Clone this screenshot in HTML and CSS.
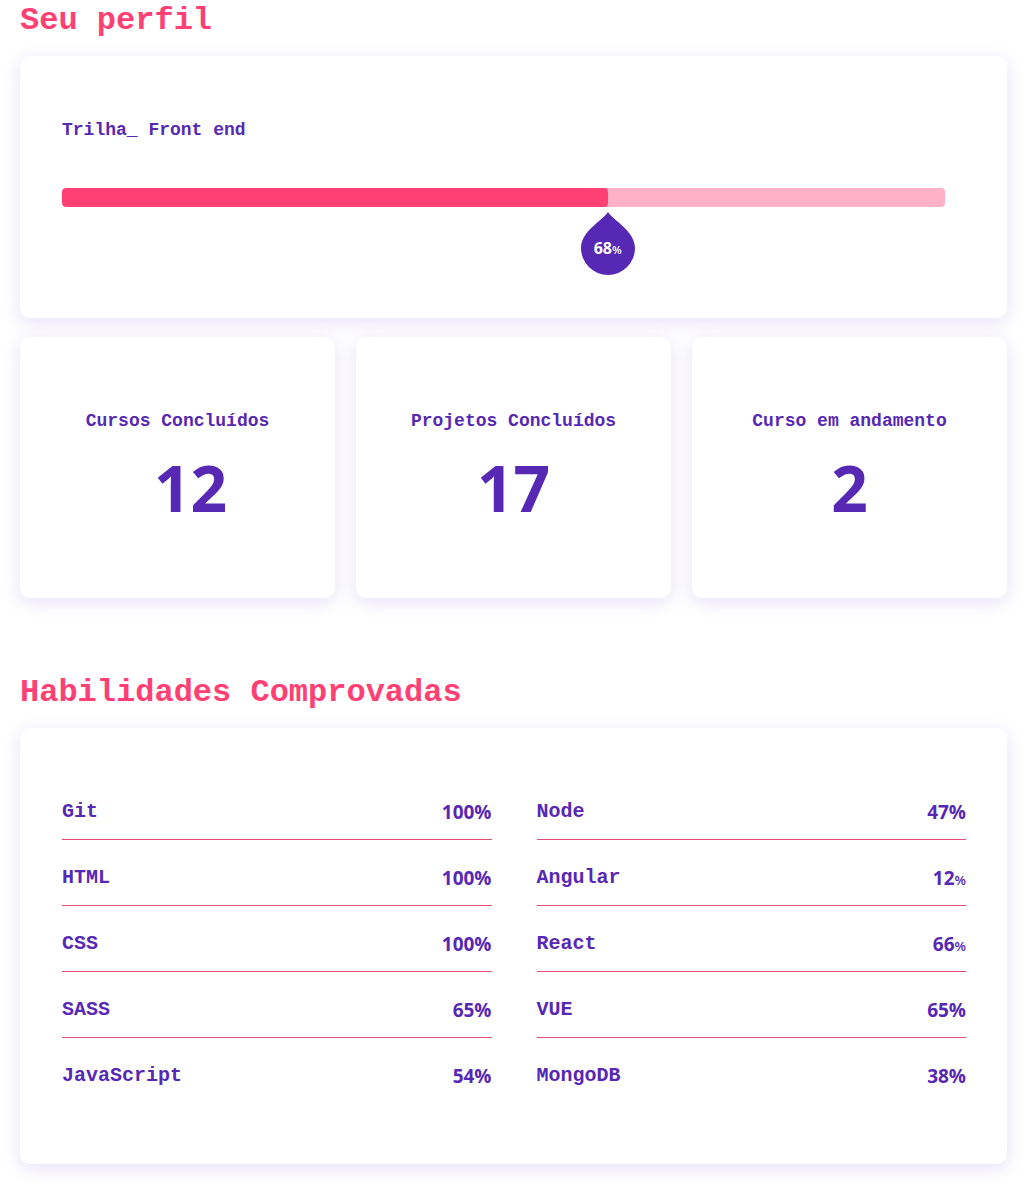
FILE: index.html
```html
<!DOCTYPE html>
<html lang="pt-BR">
<head>
<meta charset="utf-8">
<title>Seu perfil</title>
<link rel="stylesheet" href="styles.css">
</head>
<body>
<main class="page">
  <h1 class="section-title">Seu perfil</h1>
  <section class="card track">
    <p class="track-name">Trilha_ Front end</p>
    <div class="bar"><div class="bar-fill" style="width:61.8%"></div></div>
    <div class="pin-row">
      <div class="pin" style="left:61.8%">
        <svg class="pin-shape" viewBox="0 0 54 63" width="54" height="63"><path d="M27 0 C33 9 54 19 54 36 A27 27 0 0 1 0 36 C0 19 21 9 27 0 Z" fill="#5628b4"/></svg>
        <span class="pin-text">68<small>%</small></span>
      </div>
    </div>
  </section>

  <section class="stats">
    <div class="card stat">
      <p class="stat-label">Cursos Concluídos</p>
      <p class="stat-num stat-num-shift">12</p>
    </div>
    <div class="card stat">
      <p class="stat-label">Projetos Concluídos</p>
      <p class="stat-num">17</p>
    </div>
    <div class="card stat">
      <p class="stat-label">Curso em andamento</p>
      <p class="stat-num">2</p>
    </div>
  </section>

  <h2 class="section-title skills-title">Habilidades Comprovadas</h2>
  <section class="card skills">
    <ul class="skill-list">
      <li class="skill"><span class="skill-name">Git</span><span class="skill-val">100%</span></li>
      <li class="skill"><span class="skill-name">HTML</span><span class="skill-val">100%</span></li>
      <li class="skill"><span class="skill-name">CSS</span><span class="skill-val">100%</span></li>
      <li class="skill"><span class="skill-name">SASS</span><span class="skill-val">65%</span></li>
      <li class="skill"><span class="skill-name">JavaScript</span><span class="skill-val">54%</span></li>
    </ul>
    <ul class="skill-list">
      <li class="skill"><span class="skill-name">Node</span><span class="skill-val">47%</span></li>
      <li class="skill"><span class="skill-name">Angular</span><span class="skill-val">12<small>%</small></span></li>
      <li class="skill"><span class="skill-name">React</span><span class="skill-val">66<small>%</small></span></li>
      <li class="skill"><span class="skill-name">VUE</span><span class="skill-val">65%</span></li>
      <li class="skill"><span class="skill-name">MongoDB</span><span class="skill-val">38%</span></li>
    </ul>
  </section>
</main>
</body>
</html>
```

FILE: styles.css
```css
* { box-sizing: border-box; }
html, body { margin: 0; padding: 0; background: #fff; }
body {
  font-family: "Liberation Mono", "DejaVu Sans Mono", monospace;
  color: #5628b4;
}
.page {
  padding: 0 21px 20px 20px;
}
.section-title {
  margin: 0 0 17px;
  padding-top: 3px;
  font-size: 32px;
  line-height: 36px;
  font-weight: 700;
  color: #ff4074;
}
.skills-title { margin-top: 74px; }
.card {
  background: #fff;
  border-radius: 10px;
  box-shadow: 0 4px 18px rgba(100, 60, 200, 0.16);
}
.track {
  padding: 63px 62px 0 42px;
  height: 262px;
}
.track-name {
  margin: 0;
  font-size: 18px;
  line-height: 22px;
  font-weight: 700;
}
.bar {
  margin-top: 47px;
  height: 19px;
  border-radius: 4px;
  background: #ffb1c7;
  overflow: hidden;
}
.bar-fill {
  height: 100%;
  background: #ff4074;
  border-radius: 4px;
}
.pin-row {
  position: relative;
  height: 67px;
}
.pin {
  position: absolute;
  top: 5px;
  width: 54px;
  height: 63px;
  margin-left: -27px;
}
.pin-shape { display: block; }
.pin-text {
  position: absolute;
  left: 0;
  right: 0;
  top: 25px;
  text-align: center;
  font-family: "Open Sans", "DejaVu Sans", sans-serif;
  font-weight: 700;
  font-size: 16px;
  line-height: 22px;
  color: #fff;
}
.pin-text small, .skill-val small {
  font-size: 0.7em;
  font-weight: 600;
  line-height: 0;
}
.stats {
  display: grid;
  grid-template-columns: repeat(3, 1fr);
  gap: 21px;
  margin-top: 19px;
}
.stat {
  height: 261px;
  display: flex;
  flex-direction: column;
  align-items: center;
  justify-content: center;
}
.stat-label {
  margin: 0;
  font-size: 18px;
  line-height: 22px;
  font-weight: 700;
}
.stat-num {
  margin: 18px 0 0;
  font-family: "Open Sans", "DejaVu Sans", sans-serif;
  font-size: 64px;
  line-height: 76px;
  font-weight: 700;
}
.stat-num-shift { padding-left: 26px; }
.skills {
  display: grid;
  grid-template-columns: 1fr 1fr;
  column-gap: 45px;
  padding: 46px 41px 61px 42px;
}
.skill-list {
  list-style: none;
  margin: 0;
  padding: 0;
}
.skill {
  display: flex;
  justify-content: space-between;
  align-items: center;
  height: 66px;
  padding: 26px 0 15px;
  border-bottom: 1px solid #e64d75;
}
.skill:last-child { border-bottom: none; height: 65px; }
.skill-name {
  font-size: 20px;
  line-height: 24px;
  font-weight: 700;
}
.skill-val {
  font-family: "Open Sans", "DejaVu Sans", sans-serif;
  font-size: 19px;
  line-height: 24px;
  font-weight: 700;
}
```
